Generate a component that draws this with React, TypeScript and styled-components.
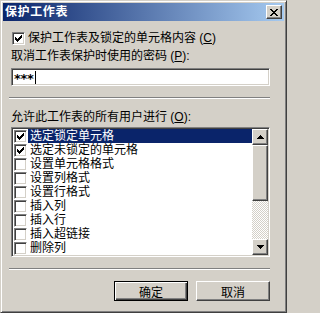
import React from "react";
import styled, { createGlobalStyle, css } from "styled-components";

const Global = createGlobalStyle`
  html, body { margin: 0; padding: 0; background: #d4d0c8; }
  body { width: 287px; height: 313px; overflow: hidden; }
`;

const FONT = `"Liberation Sans", "Noto Sans CJK SC", sans-serif`;

const raised = css`
  border: 1px solid;
  border-color: #ffffff #404040 #404040 #ffffff;
  box-shadow: inset -1px -1px #808080, inset 1px 1px #d4d0c8;
`;

const sunken = css`
  border: 1px solid;
  border-color: #808080 #ffffff #ffffff #808080;
  box-shadow: inset 1px 1px #404040, inset -1px -1px #d4d0c8;
`;

const Window = styled.div`
  box-sizing: border-box;
  width: 287px;
  height: 313px;
  background: #d4d0c8;
  border: 1px solid;
  border-color: #d4d0c8 #404040 #404040 #d4d0c8;
  box-shadow: inset 1px 1px #ffffff, inset -1px -1px #808080;
  padding: 2px;
  display: flex;
  flex-direction: column;
  font-family: ${FONT};
  font-size: 12px;
  color: #000;
`;

const TitleBar = styled.div`
  height: 18px;
  flex: none;
  display: flex;
  align-items: center;
  justify-content: space-between;
  background: linear-gradient(to right, #0a246a, #a6caf0);
  padding: 0 2px;
`;

const Title = styled.span`
  color: #ffffff;
  font-weight: bold;
  font-size: 12px;
  line-height: 18px;
  letter-spacing: 0.6px;
`;

const CloseButton = styled.div`
  box-sizing: border-box;
  width: 16px;
  height: 14px;
  background: #d4d0c8;
  ${raised};
  display: flex;
  align-items: center;
  justify-content: center;
`;

const Content = styled.div`
  flex: 1;
  display: flex;
  flex-direction: column;
  padding: 0 14px 0 6px;
`;

const CheckRow = styled.label`
  margin: 11px 0 0 3px;
  display: flex;
  align-items: center;
  gap: 3px;
  height: 13px;
  line-height: 13px;
`;

const Box = styled.span`
  box-sizing: border-box;
  flex: none;
  width: 13px;
  height: 13px;
  background: #ffffff;
  ${sunken};
  display: flex;
  align-items: center;
  justify-content: center;
`;

const Label = styled.div<{ $top: number }>`
  margin: ${(p) => p.$top}px 0 0 2px;
  line-height: 14px;
  height: 14px;
  white-space: nowrap;
`;

const PasswordInput = styled.div`
  box-sizing: border-box;
  margin: 5px 0 0 2px;
  height: 18px;
  background: #ffffff;
  ${sunken};
  display: flex;
  align-items: center;
  padding-left: 2px;
`;

const Mask = styled.span`
  font-family: "DejaVu Sans", sans-serif;
  font-size: 13px;
  font-weight: bold;
  letter-spacing: -0.3px;
  line-height: 14px;
  padding-top: 4px;
`;

const Caret = styled.span`
  width: 1px;
  height: 13px;
  background: #000;
  margin-left: 1px;
`;

const Separator = styled.div`
  margin-top: 11px;
  height: 0;
  border-top: 1px solid #808080;
  border-bottom: 1px solid #ffffff;
`;

const ListBox = styled.div`
  box-sizing: border-box;
  margin: 3px 0 0 2px;
  height: 130px;
  background: #ffffff;
  ${sunken};
  padding: 1px;
  display: flex;
`;

const Items = styled.div`
  flex: 1;
  overflow: hidden;
  padding-left: 1px;
  display: flex;
  flex-direction: column;
`;

const Item = styled.div`
  height: 14px;
  flex: none;
  display: flex;
  align-items: flex-start;
`;

const ItemBoxWrap = styled.span`
  margin-top: 1px;
  display: flex;
`;

const ItemText = styled.span<{ $selected: boolean }>`
  flex: 1;
  margin-left: 1px;
  padding-left: 2px;
  height: 14px;
  line-height: 14px;
  white-space: nowrap;
  background: ${(p) => (p.$selected ? "#0a246a" : "transparent")};
  color: ${(p) => (p.$selected ? "#ffffff" : "#000000")};
`;

const ScrollBar = styled.div`
  width: 16px;
  flex: none;
  display: flex;
  flex-direction: column;
`;

const ScrollButton = styled.div`
  box-sizing: border-box;
  width: 16px;
  height: 16px;
  flex: none;
  background: #d4d0c8;
  ${raised};
  display: flex;
  align-items: center;
  justify-content: center;
`;

const Thumb = styled.div`
  box-sizing: border-box;
  height: 56px;
  flex: none;
  background: #d4d0c8;
  ${raised};
`;

const Track = styled.div`
  flex: 1;
  background-color: #ffffff;
  background-image: repeating-conic-gradient(#d4d0c8 0 25%, #ffffff 0 50%);
  background-size: 2px 2px;
`;

const Footer = styled.div`
  margin-top: 11px;
  display: flex;
  justify-content: flex-end;
  gap: 8px;
`;

const Button = styled.button<{ $default?: boolean }>`
  box-sizing: border-box;
  width: 74px;
  height: 20px;
  padding: 0;
  background: #d4d0c8;
  font-family: ${FONT};
  font-size: 12px;
  color: #000;
  display: flex;
  align-items: center;
  justify-content: center;
  ${(p) =>
    p.$default
      ? css`
          border: 1px solid #000000;
          box-shadow: inset 1px 1px #ffffff, inset -1px -1px #404040,
            inset -2px -2px #808080;
        `
      : raised};
`;

const Check = () => (
  <svg width="7" height="7" viewBox="0 0 7 7" shapeRendering="crispEdges">
    {[2, 3, 4, 3, 2, 1, 0].map((y, x) => (
      <rect key={x} x={x} y={y} width="1" height="3" fill="#000" />
    ))}
  </svg>
);

const CheckBox = ({ checked }: { checked: boolean }) => (
  <Box>{checked && <Check />}</Box>
);

const CloseGlyph = () => (
  <svg width="8" height="7" viewBox="0 0 8 7" shapeRendering="crispEdges">
    <path
      d="M0 0h2v1H0zM6 0h2v1H6zM1 1h2v1H1zM5 1h2v1H5zM2 2h4v1H2zM3 3h2v1H3zM2 4h4v1H2zM1 5h2v1H1zM5 5h2v1H5zM0 6h2v1H0zM6 6h2v1H6z"
      fill="#000"
    />
  </svg>
);

const Arrow = ({ up }: { up: boolean }) => (
  <svg width="7" height="4" viewBox="0 0 7 4" shapeRendering="crispEdges">
    <path
      d={up ? "M3 0h1v1H3zM2 1h3v1H2zM1 2h5v1H1zM0 3h7v1H0z" : "M0 0h7v1H0zM1 1h5v1H1zM2 2h3v1H2zM3 3h1v1H3z"}
      fill="#000"
    />
  </svg>
);

const items = [
  { text: "选定锁定单元格", checked: true },
  { text: "选定未锁定的单元格", checked: true },
  { text: "设置单元格格式", checked: false },
  { text: "设置列格式", checked: false },
  { text: "设置行格式", checked: false },
  { text: "插入列", checked: false },
  { text: "插入行", checked: false },
  { text: "插入超链接", checked: false },
  { text: "删除列", checked: false },
];

export default function App() {
  return (
    <>
      <Global />
      <Window>
        <TitleBar>
          <Title>保护工作表</Title>
          <CloseButton>
            <CloseGlyph />
          </CloseButton>
        </TitleBar>
        <Content>
          <CheckRow>
            <CheckBox checked />
            <span>
              保护工作表及锁定的单元格内容 (<u>C</u>)
            </span>
          </CheckRow>
          <Label $top={4}>
            取消工作表保护时使用的密码 (<u>P</u>):
          </Label>
          <PasswordInput>
            <Mask>***</Mask>
            <Caret />
          </PasswordInput>
          <Separator />
          <Label $top={11}>
            允许此工作表的所有用户进行 (<u>O</u>):
          </Label>
          <ListBox>
            <Items>
              {items.map((it, i) => (
                <Item key={it.text}>
                  <ItemBoxWrap>
                    <CheckBox checked={it.checked} />
                  </ItemBoxWrap>
                  <ItemText $selected={i === 0}>{it.text}</ItemText>
                </Item>
              ))}
            </Items>
            <ScrollBar>
              <ScrollButton>
                <Arrow up />
              </ScrollButton>
              <Thumb />
              <Track />
              <ScrollButton>
                <Arrow up={false} />
              </ScrollButton>
            </ScrollBar>
          </ListBox>
          <Separator />
          <Footer>
            <Button $default>确定</Button>
            <Button>取消</Button>
          </Footer>
        </Content>
      </Window>
    </>
  );
}
